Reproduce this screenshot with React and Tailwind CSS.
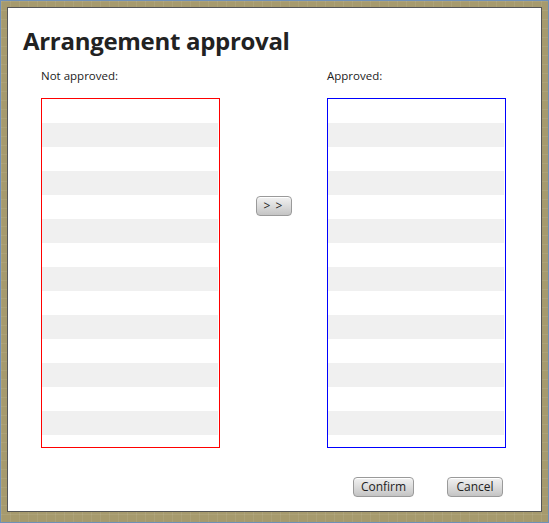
const rows = Array.from({ length: 15 }, (_, i) => i);

const StripedList = ({ borderClass }) => (
  <div className={`w-[179px] h-[350px] border ${borderClass} bg-white overflow-hidden pr-px`}>
    {rows.map((i) => (
      <div key={i} className={`h-6 ${i % 2 === 1 ? 'bg-[#f0f0f0]' : 'bg-white'}`}></div>
    ))}
  </div>
);

const GrayButton = ({ children, className = '' }) => (
  <button
    className={`h-5 rounded-[4px] border border-[#9a9a9a] bg-[linear-gradient(#f2f2f2,#dedede_45%,#c4c4c4)] text-[12px] leading-none text-[#222] shadow-[inset_0_1px_0_#fff] ${className}`}
  >
    {children}
  </button>
);

export default function App() {
  return (
    <div
      className="w-[549px] h-[523px] border border-[#6f90b8] bg-[#a69a6d] bg-[image:linear-gradient(rgba(255,255,255,0.07)_1px,transparent_1px),linear-gradient(90deg,rgba(255,255,255,0.07)_1px,transparent_1px)] bg-[size:9px_9px] pt-[6px] px-[6px] pb-[10px]"
      style={{ fontFamily: '"Open Sans", "Noto Sans", sans-serif' }}
    >
      <div className="h-[505px] border border-[#555] bg-white flex flex-col">
        <h1 className="pl-[15px] pt-[18px] text-[24px] leading-[30px] font-bold text-[#222] tracking-[-0.3px]">
          Arrangement approval
        </h1>

        <div className="flex pl-[33px] pt-[12px]">
          <div className="flex flex-col">
            <span className="text-[11.5px] leading-4 text-[#222]">Not approved:</span>
            <div className="mt-[14px]">
              <StripedList borderClass="border-[#ff0000]" />
            </div>
          </div>

          <div className="w-[107px] flex justify-center pt-[128px]">
            <GrayButton className="w-9 text-[11px] tracking-[1px]">&gt; &gt;</GrayButton>
          </div>

          <div className="flex flex-col">
            <span className="text-[11.5px] leading-4 text-[#222]">Approved:</span>
            <div className="mt-[14px]">
              <StripedList borderClass="border-[#0000ff]" />
            </div>
          </div>
        </div>

        <div className="flex justify-end gap-[33px] pr-[38px] pt-[29px]">
          <GrayButton className="w-[61px]">Confirm</GrayButton>
          <GrayButton className="w-[56px]">Cancel</GrayButton>
        </div>
      </div>
    </div>
  );
}
